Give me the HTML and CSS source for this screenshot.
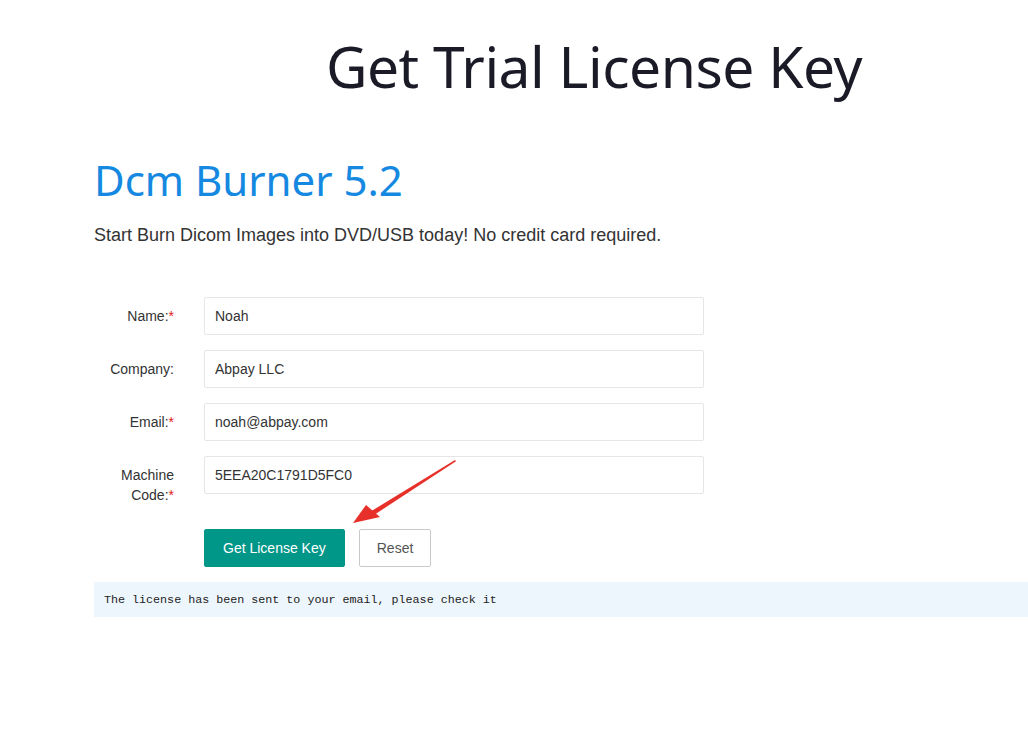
FILE: index.html
```html
<!DOCTYPE html>
<html lang="en">
<head>
    <meta charset="UTF-8">
    <title>Get Trial License Key</title>
    <link rel="stylesheet" href="styles.css">
</head>
<body>
    <div class="main">
        <h1 class="page-title">Get Trial License Key</h1>

        <h2 class="product-title">Dcm Burner 5.2</h2>
        <p class="lead">Start Burn Dicom Images into DVD/USB today! No credit card required.</p>

        <form class="trial-form">
            <div class="form-item">
                <label class="form-label">Name:<span class="req">*</span></label>
                <input class="form-input" type="text" value="Noah">
            </div>
            <div class="form-item">
                <label class="form-label">Company:</label>
                <input class="form-input" type="text" value="Abpay LLC">
            </div>
            <div class="form-item">
                <label class="form-label">Email:<span class="req">*</span></label>
                <input class="form-input" type="text" value="noah@abpay.com">
            </div>
            <div class="form-item">
                <label class="form-label">Machine Code:<span class="req">*</span></label>
                <input class="form-input" type="text" value="5EEA20C1791D5FC0">
            </div>
            <div class="form-actions">
                <button class="btn btn-primary" type="button">Get License Key</button>
                <button class="btn btn-plain" type="reset">Reset</button>
                <!-- annotation arrow pointing at the submit button -->
                <svg class="arrow" width="110" height="70" viewBox="0 0 110 70">
                    <polygon points="103,1 104,2.2 22,56 19.5,52" fill="#e8302a"/>
                    <polygon points="1,64 14,46 28,58" fill="#e8302a"/>
                </svg>
            </div>
        </form>

        <div class="result">The license has been sent to your email, please check it</div>
    </div>
</body>
</html>
```

FILE: styles.css
```css
html {
    overflow: hidden;
}

body {
    margin: 0;
    background: #fff;
    font-family: "Liberation Sans", Arial, sans-serif;
    color: #333;
}

.main {
    width: 1000px;
    margin-left: 94px;
}

.page-title {
    margin: 0;
    padding-top: 26px;
    text-align: center;
    font-family: "Noto Sans", sans-serif;
    font-weight: 400;
    font-size: 57px;
    line-height: 80px;
    color: #1b1b28;
    letter-spacing: -0.5px;
}

.product-title {
    margin: 44px 0 0 0;
    font-family: "Noto Sans", sans-serif;
    font-weight: 400;
    font-size: 42px;
    line-height: 60px;
    color: #1589e1;
}

.lead {
    margin: 12px 0 0 0;
    font-size: 18px;
    line-height: 26px;
    color: #333;
}

.trial-form {
    margin-top: 49px;
}

.form-item {
    display: flex;
    align-items: flex-start;
    margin-bottom: 15px;
}

.form-label {
    width: 80px;
    padding: 9px 30px 9px 0;
    font-size: 14px;
    line-height: 20px;
    text-align: right;
    color: #333;
}

.req {
    color: #e02020;
}

.form-input {
    box-sizing: border-box;
    width: 500px;
    height: 38px;
    margin: 0;
    padding: 0 10px;
    border: 1px solid #e6e6e6;
    border-radius: 2px;
    font-family: "Liberation Sans", Arial, sans-serif;
    font-size: 14px;
    color: #333;
    background: #fff;
}

.form-actions {
    position: relative;
    display: flex;
    gap: 14px;
    padding-left: 110px;
}

.btn {
    box-sizing: border-box;
    height: 38px;
    padding: 0 17px;
    border-radius: 2px;
    font-family: "Liberation Sans", Arial, sans-serif;
    font-size: 14px;
    line-height: 36px;
}

.btn-primary {
    border: 1px solid #009688;
    background: #009688;
    color: #fff;
    padding: 0 18px;
}

.btn-plain {
    border: 1px solid #c9c9c9;
    background: #fff;
    color: #555;
}

.arrow {
    position: absolute;
    left: 258px;
    top: -70px;
}

.result {
    margin-top: 15px;
    height: 35px;
    padding-left: 10px;
    background: #eef6fd;
    font-family: "Liberation Mono", monospace;
    font-size: 11.7px;
    line-height: 36px;
    color: #222;
}
```
